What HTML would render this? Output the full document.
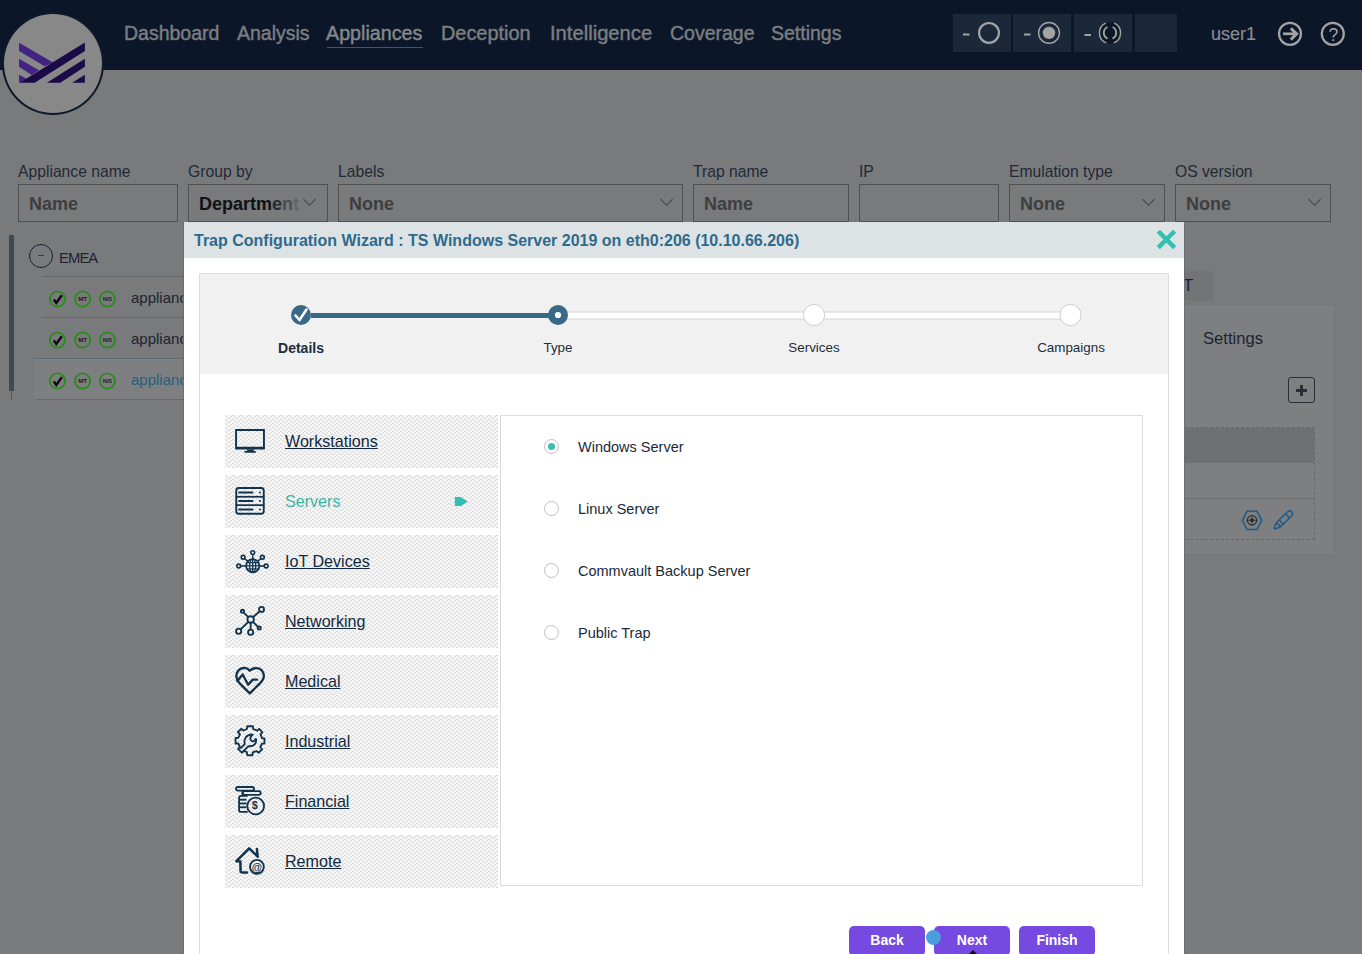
<!DOCTYPE html>
<html><head><meta charset="utf-8">
<style>
*{box-sizing:border-box;margin:0;padding:0}
html,body{width:1362px;height:954px;overflow:hidden}
body{background:#797a7c;font-family:"Liberation Sans",sans-serif;position:relative}
.abs{position:absolute}
svg{position:absolute;overflow:visible}
#hdr{position:absolute;left:0;top:0;width:1362px;height:70px;background:#0b1729}
.nav{position:absolute;top:21px;font-size:19.5px;color:#7b7d80;white-space:nowrap;line-height:24px;-webkit-text-stroke:0.45px}
.hbox{position:absolute;top:14px;height:38px;background:#1a2839}
.lbl{position:absolute;top:162px;font-size:15.7px;color:#1f2a36;white-space:nowrap;line-height:20px}
.inp{position:absolute;top:184px;height:38px;border:1px solid #4f5052;background:#797a7c}
.inp span{position:absolute;left:10px;top:9px;font-size:18px;font-weight:bold;color:#3e3e40;line-height:20px;white-space:nowrap}
.chev{position:absolute;top:10px;width:9px;height:9px;border-right:1.6px solid #3e3e40;border-bottom:1.6px solid #3e3e40;transform:rotate(45deg)}
.trow{position:absolute;height:1px;background:#616970}
.gic{position:absolute;width:17px;height:17px;border:2px solid #2f8a21;border-radius:50%;font-size:6px;font-weight:bold;color:#1a1d22;text-align:center;line-height:13px;letter-spacing:-0.3px}
.app{position:absolute;left:131px;font-size:15px;color:#1c2433;white-space:nowrap;line-height:20px}
#modal{position:absolute;left:184px;top:222px;width:1000px;height:732px;background:#fff;box-shadow:-1px 0 0 #6b6e6e,1px 0 0 #6b6e6e}
#mtitle{position:absolute;left:0;top:0;width:1000px;height:36px;background:#dde3e4}
#mtitle span{position:absolute;left:10px;top:10px;font-size:16px;font-weight:bold;color:#2f6a8c;white-space:nowrap;line-height:18px}
#outer{position:absolute;left:15px;top:51px;width:970px;height:700px;border:1px solid #dcdcdc}
#stepper{position:absolute;left:0;top:0;width:968px;height:100px;background:#f1f1f1}
.slab{position:absolute;top:117px;font-size:13.4px;color:#1d2d3d;white-space:nowrap;line-height:18px;transform:translateX(-50%)}
.item{position:absolute;left:41px;width:273px;height:53px;overflow:hidden}
.item .t{position:absolute;left:60px;top:16px;font-size:16.1px;color:#112a40;text-decoration:underline;white-space:nowrap;line-height:20px}
.radio{position:absolute;left:360px;width:15px;height:15px;border:1px solid #c0c0c0;border-radius:50%;background:#fff}
.rlab{position:absolute;left:394px;font-size:14.5px;color:#1b2a38;white-space:nowrap;line-height:18px}
.btn{position:absolute;top:704px;width:76px;height:30px;background:#7649e0;border-radius:5px;color:#fff;font-weight:bold;font-size:14px;text-align:center;line-height:28px}
</style></head><body>

<div id="hdr">
  <div class="nav" style="left:124px">Dashboard</div>
  <div class="nav" style="left:237px">Analysis</div>
  <div class="nav" style="left:326px;font-size:19.7px;color:#85878a">Appliances</div>
  <div class="abs" style="left:327px;top:47px;width:96px;height:1px;background:#56409a"></div>
  <div class="nav" style="left:441px;font-size:19.9px">Deception</div>
  <div class="nav" style="left:550px;font-size:20.2px">Intelligence</div>
  <div class="nav" style="left:670px">Coverage</div>
  <div class="nav" style="left:771px">Settings</div>

  <div class="hbox" style="left:953px;width:58px"></div>
  <div class="hbox" style="left:1013px;width:58px"></div>
  <div class="hbox" style="left:1074px;width:58px"></div>
  <div class="hbox" style="left:1135px;width:42px"></div>
  <svg style="left:0;top:0" width="1362" height="70">
    <g fill="none" stroke="#a3a3a3" stroke-width="2">
      <line x1="963" y1="34.5" x2="969.5" y2="34.5"/>
      <circle cx="989" cy="32.9" r="9.9" stroke-width="2.2"/>
      <line x1="1024" y1="34.5" x2="1030.5" y2="34.5"/>
      <circle cx="1049" cy="32.9" r="10.4" stroke-width="1.4"/>
      <line x1="1084.5" y1="35" x2="1091" y2="35"/>
    </g>
    <circle cx="1110" cy="32.8" r="10.6" fill="#0d1826"/>
    <g fill="none" stroke="#a3a3a3">
      <path d="M1105.8 23.2 A10.6 10.6 0 0 0 1106.3 42.8 M1114.2 23.2 A10.6 10.6 0 0 1 1113.7 42.8" stroke-width="1.4"/>
      <path d="M1107.5 27 A6.4 6.4 0 0 0 1107.5 38.6 M1112.5 27 A6.4 6.4 0 0 1 1112.5 38.6" stroke-width="1.9"/>
      <circle cx="1290" cy="33.8" r="11" stroke-width="2.3"/>
      <path d="M1283 33.8 H1296" stroke-width="2.7"/>
      <path d="M1290.8 28.3 L1296.6 33.8 L1290.8 39.6" stroke-width="3" stroke-linejoin="miter"/>
      <circle cx="1332.8" cy="33.8" r="11" stroke-width="2.3"/>
    </g>
    <circle cx="1049" cy="32.9" r="6.2" fill="#a3a3a3"/>
    <text x="1333.3" y="40.8" font-family="Liberation Sans" font-size="17.5" fill="#a3a3a3" text-anchor="middle">?</text>
  </svg>
  <div class="nav" style="left:1211px;top:21.5px;font-size:18px;color:#8b8d90;-webkit-text-stroke:0.15px">user1</div>
</div>

<!-- logo circle -->
<div class="abs" style="left:2px;top:12px;width:102px;height:103px;border-radius:50%;background:#888888;border:2.6px solid #0f1a29"></div>
<svg style="left:10px;top:35px" width="85" height="55" viewBox="0 0 1362 881">
  <g fill="#432381">
    <polygon points="145,125 690,440 555,500 145,255"/>
    <polygon points="145,380 465,565 345,640 145,510"/>
    <polygon points="145,635 265,700 175,765 145,765"/>
  </g>
  <g fill="#1b0a48">
    <polygon points="1200,120 1200,255 395,765 160,765 265,695"/>
    <polygon points="1200,380 1200,510 805,765 590,765"/>
    <polygon points="1200,635 1200,765 995,765"/>
  </g>
</svg>

<!-- filter labels -->
<div class="lbl" style="left:18px">Appliance name</div>
<div class="lbl" style="left:188px">Group by</div>
<div class="lbl" style="left:338px">Labels</div>
<div class="lbl" style="left:693px">Trap name</div>
<div class="lbl" style="left:859px">IP</div>
<div class="lbl" style="left:1009px">Emulation type</div>
<div class="lbl" style="left:1175px">OS version</div>

<div class="inp" style="left:18px;width:160px"><span>Name</span></div>
<div class="inp" style="left:188px;width:140px;overflow:hidden"><span style="color:#101114;top:9px">Departm<span style="position:static;color:#2a2b30">e</span><span style="position:static;color:#4a4d52">n</span><span style="position:static;color:#62666a">t</span></span><div class="chev" style="left:116px"></div></div>
<div class="inp" style="left:338px;width:345px"><span>None</span><div class="chev" style="left:323px"></div></div>
<div class="inp" style="left:693px;width:156px"><span>Name</span></div>
<div class="inp" style="left:859px;width:140px"></div>
<div class="inp" style="left:1009px;width:156px"><span>None</span><div class="chev" style="left:134px"></div></div>
<div class="inp" style="left:1175px;width:156px"><span>None</span><div class="chev" style="left:134px"></div></div>

<!-- tree -->
<div class="abs" style="left:9px;top:235px;width:5px;height:156px;background:#3f4a55"></div>
<div class="abs" style="left:11px;top:391px;width:1px;height:9px;background:#555"></div>
<div class="abs" style="left:29px;top:244px;width:24px;height:24px;border:1.4px solid #1a2030;border-radius:50%"></div>
<div class="abs" style="left:38px;top:255px;width:6px;height:1px;background:#3a3d44"></div>
<div class="abs" style="left:59px;top:248px;font-size:14.8px;letter-spacing:-0.9px;color:#1c2433;line-height:20px">EMEA</div>
<div class="abs" style="left:34px;top:359px;width:160px;height:40px;background:#7e7f81"></div>
<div class="trow" style="left:42px;top:276px;width:150px"></div>
<div class="trow" style="left:42px;top:317px;width:150px"></div>
<div class="trow" style="left:34px;top:358px;width:160px"></div>
<div class="trow" style="left:36px;top:399px;width:160px"></div>

<svg style="left:48px;top:290.4px" width="70" height="18">
  <g fill="none" stroke="#2d8a1f" stroke-width="1.9"><circle cx="9.5" cy="9" r="7.6"/><circle cx="34.6" cy="9" r="7.6"/><circle cx="59.4" cy="9" r="7.6"/></g>
  <path d="M5.8 9.3 L8.3 13 L13.8 5.2" fill="none" stroke="#0a0a0a" stroke-width="2.4" stroke-linejoin="miter"/>
  <text x="34.6" y="11.2" font-family="Liberation Sans" font-weight="bold" font-size="6.2" fill="#1c2028" text-anchor="middle">MT</text>
  <text x="59.4" y="11.2" font-family="Liberation Sans" font-weight="bold" font-size="5.6" fill="#1c2028" text-anchor="middle">NIS</text>
</svg>
<svg style="left:48px;top:331.4px" width="70" height="18">
  <g fill="none" stroke="#2d8a1f" stroke-width="1.9"><circle cx="9.5" cy="9" r="7.6"/><circle cx="34.6" cy="9" r="7.6"/><circle cx="59.4" cy="9" r="7.6"/></g>
  <path d="M5.8 9.3 L8.3 13 L13.8 5.2" fill="none" stroke="#0a0a0a" stroke-width="2.4" stroke-linejoin="miter"/>
  <text x="34.6" y="11.2" font-family="Liberation Sans" font-weight="bold" font-size="6.2" fill="#1c2028" text-anchor="middle">MT</text>
  <text x="59.4" y="11.2" font-family="Liberation Sans" font-weight="bold" font-size="5.6" fill="#1c2028" text-anchor="middle">NIS</text>
</svg>
<svg style="left:48px;top:372.4px" width="70" height="18">
  <g fill="none" stroke="#2d8a1f" stroke-width="1.9"><circle cx="9.5" cy="9" r="7.6"/><circle cx="34.6" cy="9" r="7.6"/><circle cx="59.4" cy="9" r="7.6"/></g>
  <path d="M5.8 9.3 L8.3 13 L13.8 5.2" fill="none" stroke="#0a0a0a" stroke-width="2.4" stroke-linejoin="miter"/>
  <text x="34.6" y="11.2" font-family="Liberation Sans" font-weight="bold" font-size="6.2" fill="#1c2028" text-anchor="middle">MT</text>
  <text x="59.4" y="11.2" font-family="Liberation Sans" font-weight="bold" font-size="5.6" fill="#1c2028" text-anchor="middle">NIS</text>
</svg>
<div class="app" style="top:288px">appliance</div>
<div class="app" style="top:329px">appliance</div>
<div class="app" style="top:370px;color:#25607f">appliance</div>

<!-- right side settings panel -->
<div class="abs" style="left:1150px;top:271px;width:63px;height:30px;background:#737476"></div>
<div class="abs" style="left:1183px;top:276px;font-size:17px;color:#1c2433;line-height:20px">T</div>
<div class="abs" style="left:1150px;top:304px;width:185px;height:251px;background:#7e7f81;border:1px solid #76777a"></div>
<div class="abs" style="left:1203px;top:328px;font-size:16.6px;color:#1c2433;line-height:22px">Settings</div>
<div class="abs" style="left:1288px;top:377px;width:27px;height:26px;border:1px solid #2a2d33;border-radius:3px"></div>
<div class="abs" style="left:1296px;top:389px;width:11px;height:3px;background:#2a2d33"></div>
<div class="abs" style="left:1300px;top:385px;width:3px;height:11px;background:#2a2d33"></div>
<div class="abs" style="left:1150px;top:427px;width:165px;height:113px;border:1px dashed #66686a"></div>
<div class="abs" style="left:1150px;top:428px;width:164px;height:35px;background:#6f7072"></div>
<div class="abs" style="left:1150px;top:498px;width:164px;height:1px;background:#6b6c6e"></div>
<svg style="left:1240px;top:508px" width="60" height="24">
  <polygon points="2.4,12.3 7,3.2 17,3.2 21.7,12.3 17,21.5 7,21.5" fill="none" stroke="#1d5c8c" stroke-width="1.6"/>
  <circle cx="12" cy="12.3" r="4.6" fill="none" stroke="#303438" stroke-width="1.3"/>
  <circle cx="12" cy="12.3" r="2" fill="#222"/>
  <path d="M6 12.3 H18 M12 7 V17.6" stroke="#333" stroke-width="0.7"/>
  <g fill="none" stroke="#1d5c8c" stroke-width="1.6" stroke-linejoin="round">
    <path d="M36.5 14.5 L47.5 3.8 Q50 2 51.8 4 Q53.5 6 51.5 8 L40.5 18.8 Z"/>
    <path d="M36.5 14.5 L34.2 19.5 Q33.8 21 35.5 20.8 L40.5 18.8"/>
    <path d="M39.2 12 L44 16.8 M45.6 6 L50 10.5"/>
  </g>
</svg>

<!-- modal -->
<div id="modal">
  <div id="mtitle"><span>Trap Configuration Wizard : TS Windows Server 2019 on eth0:206 (10.10.66.206)</span></div>
  <svg style="left:972px;top:7px" width="22" height="22">
    <path d="M2.3 2.3 L18.6 18.6 M18.6 2.3 L2.3 18.6" stroke="#34c0b0" stroke-width="4.4" stroke-linecap="butt"/>
  </svg>
  <div id="outer">
    <div id="stepper"></div>
  </div>
  <svg style="left:0;top:0" width="1000" height="200">
    <rect x="374" y="90" width="512" height="7" fill="#fff" stroke="#d3d6d6" stroke-width="1"/>
    <rect x="127" y="91" width="248" height="5" fill="#386a88"/>
    <circle cx="117" cy="93" r="10" fill="#386a88"/>
    <path d="M111.5 93.5 L115.5 98 L122.5 87.5" fill="none" stroke="#fff" stroke-width="2.6" stroke-linecap="round" stroke-linejoin="round"/>
    <circle cx="374" cy="93" r="10" fill="#386a88"/>
    <circle cx="374" cy="93" r="3.1" fill="#fff"/>
    <circle cx="630" cy="93" r="10.6" fill="#fff" stroke="#cdd0d0" stroke-width="1"/>
    <circle cx="886.5" cy="93" r="10.6" fill="#fff" stroke="#cdd0d0" stroke-width="1"/>
  </svg>
  <div class="slab" style="left:117px;font-weight:bold;font-size:14px">Details</div>
  <div class="slab" style="left:374px">Type</div>
  <div class="slab" style="left:630px">Services</div>
  <div class="slab" style="left:887px">Campaigns</div>

  <svg style="left:41px;top:193px" width="273" height="473">
    <defs><pattern id="zz" patternUnits="userSpaceOnUse" width="8" height="4" x="0" y="0">
      <rect width="8" height="4" fill="#f5f5f5"/>
      <g fill="#d8d8d8"><rect x="0" y="0" width="1" height="1"/><rect x="1" y="1" width="1" height="1"/><rect x="2" y="2" width="1" height="1"/><rect x="3" y="3" width="1" height="1"/><rect x="4" y="3" width="1" height="1"/><rect x="5" y="2" width="1" height="1"/><rect x="6" y="1" width="1" height="1"/><rect x="7" y="0" width="1" height="1"/></g>
    </pattern></defs>
    <g fill="url(#zz)">
      <rect x="0" y="0" width="273" height="53"/><rect x="0" y="60" width="273" height="53"/>
      <rect x="0" y="120" width="273" height="53"/><rect x="0" y="180" width="273" height="53"/>
      <rect x="0" y="240" width="273" height="53"/><rect x="0" y="300" width="273" height="53"/>
      <rect x="0" y="360" width="273" height="53"/><rect x="0" y="420" width="273" height="53"/>
    </g>
  </svg>
  <div class="item" style="top:193px"><span class="t">Workstations</span></div>
  <div class="item" style="top:253px"><span class="t" style="color:#3ab5a8;text-decoration:none">Servers</span></div>
  <div class="item" style="top:313px"><span class="t">IoT Devices</span></div>
  <div class="item" style="top:373px"><span class="t">Networking</span></div>
  <div class="item" style="top:433px"><span class="t">Medical</span></div>
  <div class="item" style="top:493px"><span class="t">Industrial</span></div>
  <div class="item" style="top:553px"><span class="t">Financial</span></div>
  <div class="item" style="top:613px"><span class="t">Remote</span></div>

  <!-- menu icons: each 47x40 box, viewBox zoomed coords -->
  <svg style="left:44px;top:198px" width="47" height="40" viewBox="0 0 1121 954">
    <path fill="#11334e" fill-rule="evenodd" d="M170 215 H880 V705 H170 Z M215 262 V640 H835 V262 Z"/>
    <rect x="455" y="700" width="160" height="45" fill="#11334e"/>
    <rect x="390" y="740" width="275" height="40" rx="10" fill="#11334e"/>
  </svg>
  <svg style="left:44px;top:258px" width="47" height="40" viewBox="0 0 1121 954">
    <g fill="none" stroke="#11334e">
      <rect x="197" y="192" width="656" height="612" rx="60" stroke-width="45"/>
      <line x1="185" y1="400" x2="865" y2="400" stroke-width="42"/>
      <line x1="185" y1="600" x2="865" y2="600" stroke-width="42"/>
      <g stroke-width="45" stroke-linecap="round">
        <line x1="265" y1="297" x2="585" y2="297"/>
        <line x1="265" y1="500" x2="585" y2="500"/>
        <line x1="265" y1="705" x2="585" y2="705"/>
      </g>
    </g>
    <g fill="#11334e"><circle cx="762" cy="297" r="24"/><circle cx="762" cy="500" r="24"/><circle cx="762" cy="705" r="24"/></g>
  </svg>
  <svg style="left:44px;top:318px" width="47" height="40" viewBox="0 0 1121 954">
    <g fill="none" stroke="#11334e">
      <circle cx="590" cy="615" r="158" stroke-width="42"/>
      <ellipse cx="590" cy="615" rx="72" ry="158" stroke-width="32"/>
      <line x1="590" y1="345" x2="590" y2="775" stroke-width="32"/>
      <line x1="440" y1="540" x2="740" y2="540" stroke-width="28"/>
      <line x1="432" y1="615" x2="748" y2="615" stroke-width="28"/>
      <line x1="440" y1="690" x2="740" y2="690" stroke-width="28"/>
      <g stroke-width="38">
        <circle cx="590" cy="300" r="45"/>
        <circle cx="360" cy="412" r="45"/>
        <circle cx="820" cy="412" r="45"/>
        <circle cx="255" cy="620" r="45"/>
        <circle cx="910" cy="620" r="45"/>
        <line x1="397" y1="450" x2="475" y2="505"/>
        <line x1="783" y1="450" x2="705" y2="505"/>
        <line x1="300" y1="620" x2="432" y2="620"/>
        <line x1="865" y1="620" x2="748" y2="620"/>
      </g>
    </g>
  </svg>
  <svg style="left:44px;top:378px" width="47" height="40" viewBox="0 0 1121 954">
    <g fill="none" stroke="#11334e" stroke-width="44">
      <circle cx="540" cy="465" r="78"/>
      <circle cx="345" cy="270" r="38"/>
      <circle cx="800" cy="225" r="60"/>
      <circle cx="255" cy="745" r="62"/>
      <circle cx="540" cy="770" r="62"/>
      <circle cx="745" cy="670" r="38"/>
      <line x1="380" y1="305" x2="485" y2="410"/>
      <line x1="595" y1="410" x2="755" y2="270"/>
      <line x1="485" y1="520" x2="300" y2="700"/>
      <line x1="540" y1="543" x2="540" y2="708"/>
      <line x1="595" y1="520" x2="715" y2="640"/>
    </g>
  </svg>
  <svg style="left:44px;top:438px" width="47" height="40" viewBox="0 0 1121 954">
    <g fill="none" stroke="#11334e" stroke-width="56" stroke-linejoin="round" stroke-linecap="round">
      <path d="M520 255 C470 200 420 185 370 190 C250 200 195 300 200 400 C205 470 240 520 290 570 L520 795 L750 570 C800 520 855 470 855 390 C855 300 800 195 680 192 C620 190 570 210 520 255 Z"/>
      <path d="M225 495 L350 345 L480 590 L590 468 L695 468"/>
    </g>
  </svg>
  <svg style="left:44px;top:498px" width="47" height="40" viewBox="0 0 1121 954">
    <g fill="none" stroke="#11334e" stroke-width="44" stroke-linejoin="round">
      <path d="M460 150 L595 150 L600 215 L700 255 L745 210 L820 295 L775 345 L815 440 L870 440 L870 560 L810 565 L770 650 L815 700 L730 780 L680 740 L590 770 L585 840 L460 840 L450 765 L380 735 L330 780 L240 690 L285 640 L245 560 L180 560 L180 430 L245 425 L285 340 L235 290 L315 210 L370 250 L450 215 Z"/>
      <path d="M290 685 L400 575 C370 470 430 360 545 345 L590 350 C540 385 520 435 545 480 C570 525 620 520 665 450 C690 550 620 640 490 625 L360 750" stroke-linejoin="round"/>
    </g>
  </svg>
  <svg style="left:44px;top:558px" width="47" height="40" viewBox="0 0 1121 954">
    <g fill="none" stroke="#11334e" stroke-width="44">
      <rect x="192" y="167" width="428" height="88" rx="44"/>
      <rect x="352" y="267" width="428" height="88" rx="44"/>
      <path d="M345 275 L345 355 M470 380 L310 380 C270 380 265 400 265 430 L265 720 C265 745 280 760 310 760 L470 760"/>
      <line x1="275" y1="470" x2="440" y2="470"/>
      <line x1="275" y1="560" x2="440" y2="560"/>
      <line x1="275" y1="650" x2="440" y2="650"/>
      <circle cx="660" cy="620" r="200"/>
    </g>
    <text x="640" y="700" font-family="Liberation Sans" font-weight="bold" font-size="260" fill="#11334e" text-anchor="middle">$</text>
  </svg>
  <svg style="left:44px;top:618px" width="47" height="40" viewBox="0 0 1121 954">
    <g fill="none" stroke="#11334e" stroke-width="60" stroke-linecap="round" stroke-linejoin="round">
      <path d="M710 395 L505 200 L200 505 L295 510 L300 740 C300 765 320 775 345 775 L455 775"/>
      <line x1="690" y1="215" x2="705" y2="385"/>
      <circle cx="690" cy="640" r="165" stroke-width="44"/>
    </g>
    <text x="690" y="735" font-family="Liberation Sans" font-weight="bold" font-size="250" fill="#11334e" text-anchor="middle">@</text>
  </svg>
  <svg style="left:270px;top:271px" width="14" height="16">
    <polygon points="0.8,3.9 6.9,3.9 13.5,8.4 6.9,12.9 0.8,12.9" fill="#33bfb0"/>
  </svg>
  <div class="abs" style="left:316px;top:193px;width:643px;height:471px;border:1px solid #dcdcdc"></div>
  <div class="radio" style="top:217px"><div class="abs" style="left:3px;top:3px;width:7px;height:7px;border-radius:50%;background:#36c0ad"></div></div>
  <div class="radio" style="top:279px"></div>
  <div class="radio" style="top:341px"></div>
  <div class="radio" style="top:403px"></div>
  <div class="rlab" style="top:216px">Windows Server</div>
  <div class="rlab" style="top:278px">Linux Server</div>
  <div class="rlab" style="top:340px">Commvault Backup Server</div>
  <div class="rlab" style="top:402px">Public Trap</div>

  <div class="btn" style="left:665px">Back</div>
  <div class="btn" style="left:750px">Next</div>
  <div class="btn" style="left:835px">Finish</div>
  <svg style="left:784px;top:728px" width="10" height="4"><polygon points="1,4 5,0 9,4" fill="#111"/></svg>
  <div class="abs" style="left:742px;top:708px;width:15px;height:15px;border-radius:50%;background:#4b9de0"></div>
</div>

</body></html>
